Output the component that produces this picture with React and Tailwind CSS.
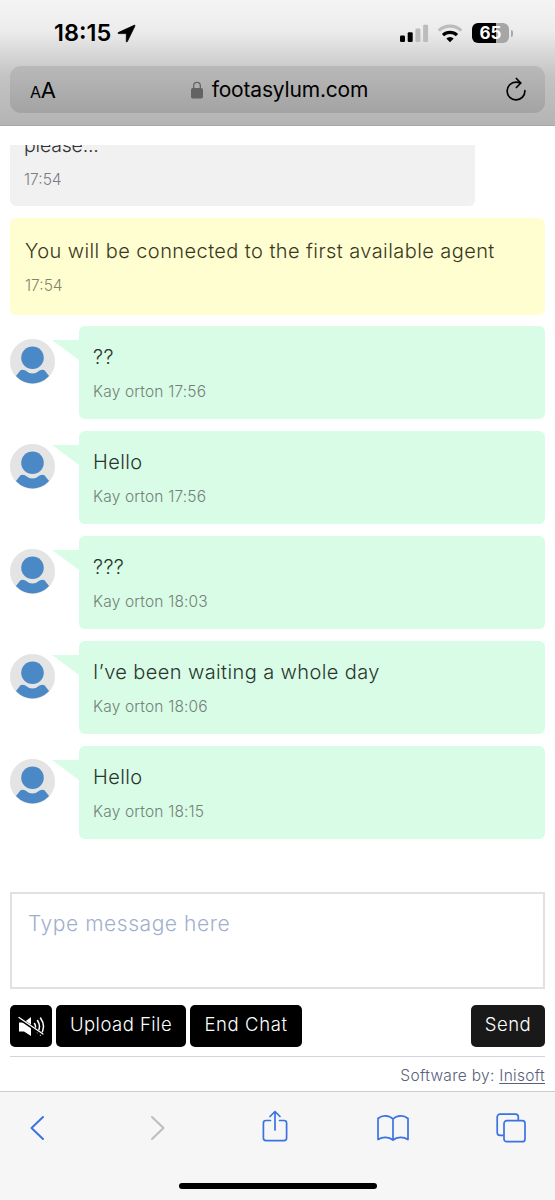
const MESSAGES = [
  { id: 1, text: '??', meta: 'Kay orton 17:56' },
  { id: 2, text: 'Hello', meta: 'Kay orton 17:56' },
  { id: 3, text: '???', meta: 'Kay orton 18:03' },
  { id: 4, text: 'I’ve been waiting a whole day', meta: 'Kay orton 18:06' },
  { id: 5, text: 'Hello', meta: 'Kay orton 18:15' },
];

function StatusBar() {
  return (
    <div className="flex h-[66px] items-center justify-between pl-[54px] pr-[42.5px]">
      <div className="flex items-center gap-[6px]">
        <span className="text-[23.5px] leading-7 font-semibold">18:15</span>
        <svg className="mt-px h-[19px] w-[19px]" viewBox="0 0 19 19">
          <path d="M17.4 1.2 1.2 8.6c-.5.3-.3 1 .3 1h7.3c.3 0 .5.2.5.5v7.3c0 .6.8.8 1 .2L18 1.8c.2-.4-.2-.8-.6-.6Z" stroke="#000" strokeWidth=".8" />
        </svg>
      </div>
      <div className="flex items-center">
        <svg className="h-[19px] w-[30px]" viewBox="0 0 30 19">
          <rect x="1" y="11.5" width="5" height="6.5" rx="1.2" />
          <rect x="8.7" y="8.3" width="5" height="9.7" rx="1.2" />
          <rect x="16.4" y="4.5" width="5" height="13.5" rx="1.2" fill="#bcbcbc" />
          <rect x="24.1" y=".7" width="5" height="17.3" rx="1.2" fill="#bcbcbc" />
        </svg>
        <svg className="ml-2 h-[19px] w-[26px]" viewBox="0 0 26 19" fill="none" strokeWidth="3.2">
          <path d="M1.8 6.7a16.2 16.2 0 0 1 22.4 0" stroke="#bcbcbc" />
          <path d="M6 11.2a10 10 0 0 1 14 0" stroke="#000" />
          <path d="m13 18.2-3.7-3.7a5.3 5.3 0 0 1 7.4 0Z" fill="#000" />
        </svg>
        <div className="ml-[9px] flex h-5 w-[37px] items-center justify-center rounded-[6px] bg-[linear-gradient(90deg,#000_65%,#a6a6a6_65%)] text-[17px] font-bold text-white">
          <span className="leading-5">65</span>
        </div>
        <div className="ml-[1.5px] h-[7px] w-[2px] rounded-r-full bg-[#a9a9a9]" />
      </div>
    </div>
  );
}

function AddressBar() {
  return (
    <div className="mx-2.5 flex h-[47px] items-center justify-between rounded-[11px] bg-[linear-gradient(180deg,#b9b9b9,#a3a3a3)] pl-5 pr-[18px]">
      <div className="flex w-[26px] items-baseline text-black">
        <span className="text-[16px] tracking-[-0.2px]">A</span>
        <span className="text-[22px] leading-7">A</span>
      </div>
      <div className="-ml-[3px] flex items-center gap-[9px]">
        <svg className="h-[18px] w-3" viewBox="0 0 12 18">
          <rect y="7" width="12" height="10.5" rx="1.8" fill="#636366" />
          <path d="M2.7 8V4.6a3.3 3.3 0 0 1 6.6 0V8" fill="none" stroke="#636366" strokeWidth="1.3" />
        </svg>
        <span className="text-[21px] leading-7 tracking-[-0.18px] whitespace-nowrap">footasylum.com</span>
      </div>
      <svg className="h-[25px] w-[21px]" viewBox="0 0 21 25" fill="none" stroke="#000" strokeWidth="1.7" strokeLinecap="round" strokeLinejoin="round">
        <path d="M18.9 13.7A8.9 8.9 0 1 1 10 5.1c1.7 0 3.2.4 4.4 1.1" />
        <path d="m10.4 1.5 4.4 4.5-4.4 4.5" />
      </svg>
    </div>
  );
}

function Avatar() {
  return (
    <svg className="mt-[13px] h-[45px] w-[45px] shrink-0" viewBox="0 0 45 45">
      <defs>
        <clipPath id="avatar">
          <circle cx="22.5" cy="22.5" r="22" />
        </clipPath>
      </defs>
      <circle cx="22.5" cy="22.5" r="22.2" fill="#e4e4e5" stroke="#dcdcdd" strokeWidth=".5" />
      <g fill="#4b89c6" clipPath="url(#avatar)">
        <circle cx="22.5" cy="18.7" r="11.3" />
        <path d="M2 45v-3l8.500-10.700q2-1.300 4.500 0 7.500 6.500 15 0 2.500-1.300 4.500 0L43 42v3Z" />
      </g>
    </svg>
  );
}

function Message({ text, meta }) {
  return (
    <div className="flex h-[93px]">
      <Avatar />
      <svg className="mt-[14px] ml-[-3px] h-5 w-[27px] shrink-0" viewBox="0 0 27 20">
        <path d="M0 0h27v20Z" fill="#d9fce6" />
      </svg>
      <div className="flex-1 rounded-[6px] bg-[#d9fce6] pt-[17px] pl-3.5 whitespace-nowrap">
        <p className="text-[20px] leading-7 font-light tracking-[0.4px] text-[#29362f]">{text}</p>
        <p className="mt-[9px] text-[15.5px] leading-6 font-light tracking-[0.17px] text-[#738078]">{meta}</p>
      </div>
    </div>
  );
}

function Composer() {
  return (
    <div className="mx-2.5 mt-[53px]">
      <div className="h-[97px] border-2 border-[#e0e1e4] pt-[14px] pl-4 text-[21px] leading-8 font-light tracking-[0.55px] text-[#a0afce]">
        Type message here
      </div>
      <div className="mt-4 flex h-[42px] items-stretch gap-1 text-[18.5px] font-light text-white">
        <button className="flex w-[42px] items-center justify-center rounded-[5px] bg-black">
          <svg className="h-[21px] w-[27px]" viewBox="0 0 27 21" fill="none" stroke="#fff" strokeLinecap="round">
            <path d="M1 6.5h5L13 1v19l-7-4.500H1Z" fill="#fff" stroke="none" />
            <path d="M16.500 7.500q2 3 0 6M19.500 4.500q4 6 0 12M22.500 2q6 8.500 0 17" strokeWidth="1.5" />
            <path d="m1 2.300 24 16.500" stroke="#000" strokeWidth="3" />
            <path d="m1 1.500 24 16.500" strokeWidth="1.3" />
          </svg>
        </button>
        <button className="w-[130px] rounded-[5px] bg-black pb-0.5 tracking-[0.48px]">Upload File</button>
        <button className="w-28 rounded-[5px] bg-black pb-0.5 tracking-[0.6px]">End Chat</button>
        <button className="ml-auto w-[74px] rounded-[5px] bg-[#191919] pb-0.5 tracking-[0.5px]">Send</button>
      </div>
      <div className="mt-[9px] border-t-[1.5px] border-[#d4d5dc] pt-[7px] text-right text-[15.5px] leading-6 font-light tracking-[0.3px] text-[#56607a]">
        Software by: <span className="underline underline-offset-2">Inisoft</span>
      </div>
    </div>
  );
}

function BottomBar() {
  return (
    <div className="mt-auto flex h-[109px] flex-col items-center border-t-[1.5px] border-[#cbcbcb] bg-[#f6f6f6]">
      <div className="flex h-[71px] w-full items-center pl-[29px] text-[#3a72e3]">
        <svg className="h-[26px] w-[17px]" viewBox="0 0 17 26" fill="none" stroke="currentColor" strokeWidth="2" strokeLinecap="round" strokeLinejoin="round">
          <path d="M14 2 2.5 13 14 24" />
        </svg>
        <svg className="ml-[103px] h-[26px] w-[17px]" viewBox="0 0 17 26" fill="none" stroke="#bdbdbf" strokeWidth="2" strokeLinecap="round" strokeLinejoin="round">
          <path d="m3 2 11.5 11L3 24" />
        </svg>
        <svg className="mb-[3px] ml-24 h-8 w-[26px]" viewBox="0 0 26 32" fill="none" stroke="currentColor" strokeWidth="1.7" strokeLinecap="round" strokeLinejoin="round">
          <path d="M8.5 10.5H4a2.600 2.600 0 0 0-2.600 2.600V28A2.600 2.600 0 0 0 4 30.600h18a2.600 2.600 0 0 0 2.600-2.600V13.100a2.600 2.600 0 0 0-2.600-2.600h-4.500" />
          <path d="M13 20V1.500M8 6.500l5-5 5 5" />
        </svg>
        <svg className="ml-[89px] h-[26px] w-8" viewBox="0 0 32 26" fill="none" stroke="currentColor" strokeWidth="1.7" strokeLinejoin="round">
          <path d="M16 25V4C12 0 5 0 1 3.500V24.500c4.500-3 11-3 15 .5 4-3.500 10.500-3.500 15-.5V3.500C27 0 20 0 16 4" />
        </svg>
        <svg className="ml-[87px] h-[30px] w-[30px]" viewBox="0 0 30 30" fill="none" stroke="currentColor" strokeWidth="1.7">
          <path d="M7.8 22.400H4a2.800 2.800 0 0 1-2.800-2.800V4A2.800 2.800 0 0 1 4 1.200h15.500A2.800 2.800 0 0 1 22.300 4v3.500" />
          <rect x="8" y="7.7" width="21" height="21" rx="2.8" />
        </svg>
      </div>
      <div className="mt-5 h-[6px] w-[198px] rounded-full bg-black" />
    </div>
  );
}

export default function App() {
  return (
    <div className="flex h-[1200px] w-[555px] flex-col overflow-hidden bg-white font-['Inter',sans-serif] text-black">
      <header className="h-[126px] shrink-0 border-b border-[#a6a6a6] bg-[linear-gradient(180deg,#f4f4f4_0%,#ececec_25%,#d8d8d8_42%,#c4c4c4_60%,#b4b4b4_100%)]">
        <StatusBar />
        <AddressBar />
      </header>

      <main className="mt-[19px] flex flex-col gap-3 px-2.5">
        {/* Earlier message, scrolled partly out of view */}
        <div className="flex h-[61px] w-[465px] flex-col justify-end overflow-hidden rounded-b-[6px] bg-[#f1f1f1] pb-[14px] pl-[14px]">
          <p className="shrink-0 text-[19.5px] leading-7 font-light tracking-[-0.2px] text-[#333]">please...</p>
          <p className="mt-[9px] shrink-0 text-[15.5px] leading-6 font-light text-[#7b7b83]">17:54</p>
        </div>
        <div className="-mb-px h-[97px] rounded-[6px] bg-[#fffed0] pt-[19px] pl-[15px] whitespace-nowrap">
          <p className="text-[20px] leading-7 font-light tracking-[0.42px] text-[#38371f]">You will be connected to the first available agent</p>
          <p className="mt-[9px] text-[15.5px] leading-6 font-light text-[#848370]">17:54</p>
        </div>
        {MESSAGES.map((m) => (
          <Message key={m.id} text={m.text} meta={m.meta} />
        ))}
      </main>

      <Composer />
      <BottomBar />
    </div>
  );
}
